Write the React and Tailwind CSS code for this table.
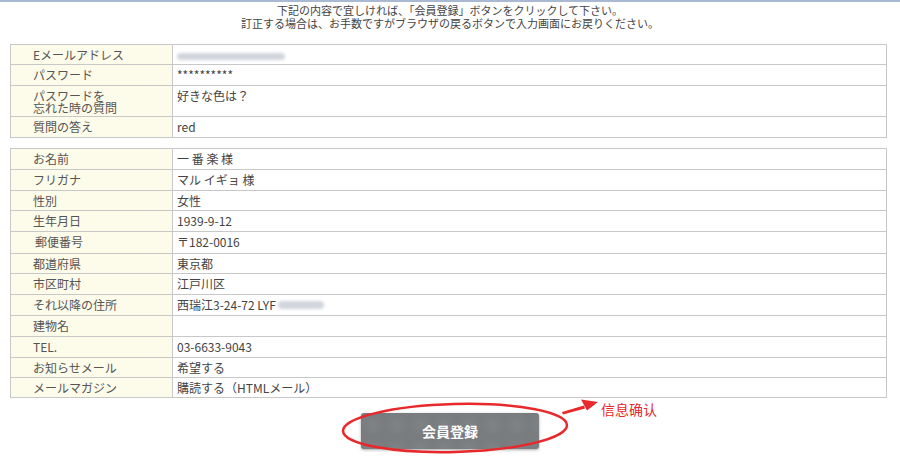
const font = { fontFamily: '"Noto Sans CJK JP", "Noto Sans", sans-serif' };

const account = [
  { label: 'Eメールアドレス', value: 'blur-mail', h: 'h-[20px]' },
  { label: 'パスワード', value: '**********', h: 'h-[21px]' },
  { label: 'パスワードを\n忘れた時の質問', value: '好きな色は？', h: 'h-[31px]' },
  { label: '質問の答え', value: 'red', h: 'h-[21px]' },
];

const profile = [
  { label: 'お名前', value: '一 番 楽 様', h: 'h-[21px]' },
  { label: 'フリガナ', value: 'マル イギョ 様', h: 'h-[21px]' },
  { label: '性別', value: '女性', h: 'h-[20px]' },
  { label: '生年月日', value: '1939-9-12', h: 'h-[21px]' },
  { label: '郵便番号', value: '〒182-0016', h: 'h-[22px]', indent: true },
  { label: '都道府県', value: '東京都', h: 'h-[20px]' },
  { label: '市区町村', value: '江戸川区', h: 'h-[21px]' },
  { label: 'それ以降の住所', value: 'blur-addr', h: 'h-[21px]' },
  { label: '建物名', value: '', h: 'h-[21px]' },
  { label: 'TEL.', value: '03-6633-9043', h: 'h-[21px]' },
  { label: 'お知らせメール', value: '希望する', h: 'h-[20px]' },
  { label: 'メールマガジン', value: '購読する（HTMLメール）', h: 'h-[20px]' },
];

const Value = ({ value }) => {
  if (value === 'blur-mail') {
    return (
      <span className="inline-flex items-center h-[12px]">
        <span className="block w-[108px] h-[7px] bg-gray-300 rounded-full blur-[1.5px]"></span>
      </span>
    );
  }
  if (value === 'blur-addr') {
    return (
      <span className="inline-flex items-center">
        西瑞江3-24-72 LYF
        <span className="block w-[46px] h-[8px] ml-[2px] bg-gray-300 rounded-full blur-[1.5px]"></span>
      </span>
    );
  }
  return value;
};

const InfoTable = ({ rows }) => (
  <table className="w-full border-collapse text-[12px] leading-[12px]">
    <tbody>
      {rows.map((row) => (
        <tr key={row.label} className={row.h}>
          <td className="w-[162px] border border-[#c8c8c8] bg-[#fdfbe9] align-top pt-[4px] pl-[22px] text-[#555] leading-[12px] whitespace-pre-line">
            {row.indent ? <span className="pl-[2px]">{row.label}</span> : row.label}
          </td>
          <td className="border border-[#c8c8c8] bg-white align-top pt-[4px] pl-[4px] text-[#444]">
            <Value value={row.value} />
          </td>
        </tr>
      ))}
    </tbody>
  </table>
);

const App = () => {
  return (
    <div className="relative w-[900px] h-[466px] bg-white overflow-hidden" style={font}>
      <div className="h-[2px] bg-[#a9b9d2]"></div>

      {/* Message */}
      <div className="pt-[2px] text-center text-[11px] leading-[13px] text-[#444]">
        <p>下記の内容で宜しければ、「会員登録」ボタンをクリックして下さい。</p>
        <p>訂正する場合は、お手数ですがブラウザの戻るボタンで入力画面にお戻りください。</p>
      </div>

      {/* Tables */}
      <div className="w-[877px] ml-[10px] mt-[14px]">
        <InfoTable rows={account} />
        <div className="h-[10px]"></div>
        <InfoTable rows={profile} />
      </div>

      {/* Submit */}
      <div className="flex justify-center pt-[15px]">
        <button className="w-[178px] h-[36px] rounded-[3px] text-white text-[14px] font-bold shadow-[0_1px_3px_rgba(0,0,0,0.35)] bg-[#7c7f81] bg-[radial-gradient(circle_at_center,#808386_0,#797c7e_75%)] bg-[length:24px_24px]">
          会員登録
        </button>
      </div>

      {/* Annotation overlay */}
      <svg className="absolute left-0 top-0 pointer-events-none" width="900" height="466">
        <ellipse cx="455" cy="428" rx="112" ry="24" fill="none" stroke="#e8282a" strokeWidth="2.5" transform="rotate(-1.5 455 428)" />
        <polygon points="562,412 584,405.5 585,408.5 563,414.5" fill="#e8282a" />
        <polygon points="581,399.5 598,402 587,410.5" fill="#e8282a" />
      </svg>
      <span
        className="absolute left-[601px] top-[400px] text-[14px] leading-[18px] text-[#e8282a]"
        style={{ fontFamily: '"Noto Sans CJK SC", sans-serif' }}
      >
        信息确认
      </span>
    </div>
  );
};

export default App;
